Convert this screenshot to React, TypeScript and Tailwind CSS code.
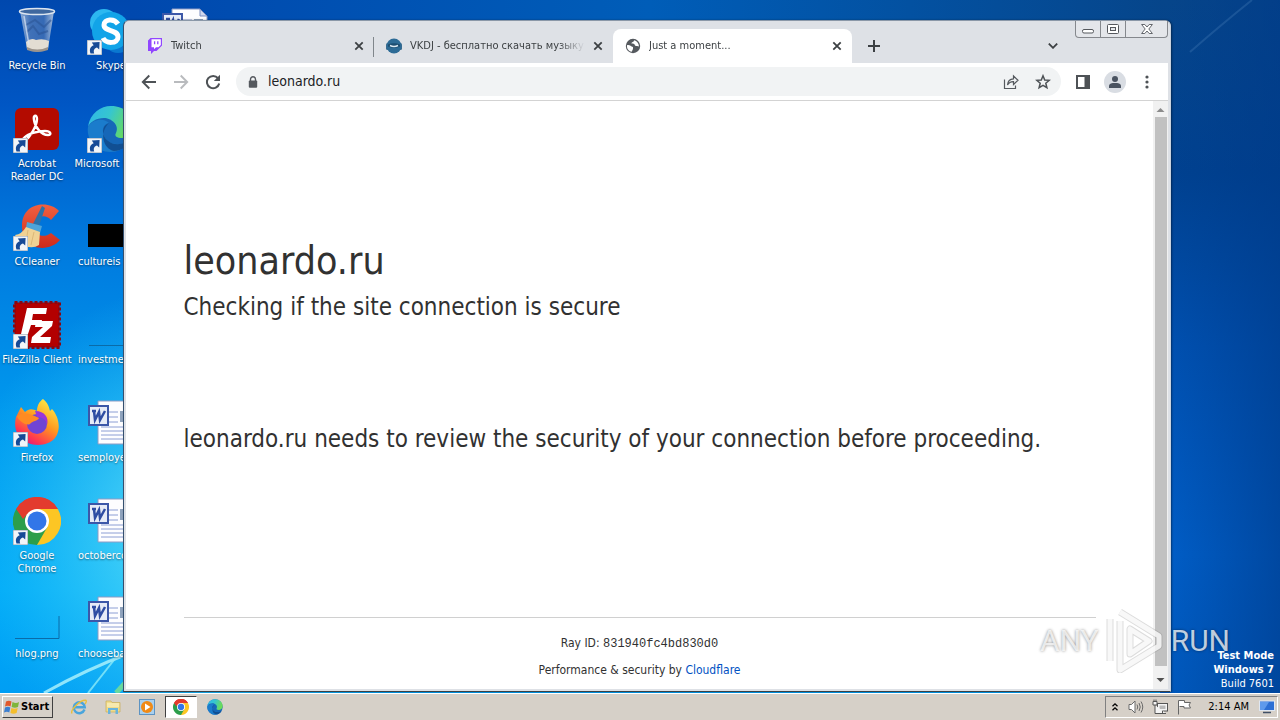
import { type ReactNode } from "react";

function ShortcutArrow() {
  return (
    <svg viewBox="0 0 15 15" className="absolute bottom-0 left-0 size-[15px]">
      <rect width="15" height="15" fill="#f2f5f9" stroke="#8d9aaa" strokeWidth="1" />
      <path d="M3.500 13.500C2 9.400 3.500 6.300 6.700 5.300L4.800 2.600 12.600 2 12.200 9.600 10 7.500C7.600 8.300 6 10 7.200 13.500Z" fill="#174a96" />
    </svg>
  );
}

function RecycleIcon() {
  return (
    <svg viewBox="0 0 48 48" className="size-12">
      <defs>
        <linearGradient id="bin" x1="0" x2="1">
          <stop offset="0" stopColor="#a9bfdc" />
          <stop offset=".3" stopColor="#4c78b8" />
          <stop offset=".7" stopColor="#3f6fb5" />
          <stop offset="1" stopColor="#c4d2e4" />
        </linearGradient>
      </defs>
      <path d="M7 4 41 4 35 42Q24 47 14 42Z" fill="url(#bin)" opacity=".85" />
      <path d="M13 35Q18 30 23 33 30 31 36 34L35 42Q24 47 14 42Z" fill="#e3ddd3" />
      <path d="M13 18 22 13 31 20 38 13M14 25 20 19 26 27 35 24" fill="none" stroke="#2c5596" strokeWidth="2" opacity=".6" />
      <path d="M14 40Q24 45 35 40V43Q24 47 14 43Z" fill="#9b938b" />
      <ellipse cx="24" cy="4.500" rx="17.500" ry="3" fill="#3f689f" stroke="#dce5ef" strokeWidth="1.500" />
      <path d="M11 9 16 38" stroke="#dbe7f6" strokeWidth="1.500" opacity=".7" />
    </svg>
  );
}

function SkypeIcon() {
  return (
    <svg viewBox="0 0 48 48" className="size-12">
      <circle cx="17" cy="16" r="14" fill="#2cb8f0" />
      <circle cx="31" cy="32" r="14" fill="#0a78d0" />
      <circle cx="24" cy="24" r="19" fill="#12a4e8" />
      <path d="M31 17C27 11 17 12 17 18 17 25 31 22 31 30 31 37 19 37 16 31" fill="none" stroke="#fff" strokeWidth="5" />
    </svg>
  );
}

function AcrobatIcon() {
  return (
    <svg viewBox="0 0 48 48" className="size-12">
      <rect x="2" y="3" width="44" height="42" rx="6" fill="#b30b00" />
      <path
        d="M12 36C17 32 24 21 24 14 24 9 20 10 21 15 22 22 28 30 35 30 39 30 38 26 32 26 24 26 15 29 12 32 9 34 9 38 12 36Z"
        fill="none"
        stroke="#fff"
        strokeWidth="2.400"
      />
    </svg>
  );
}

function EdgeIcon({ id, className }: { id: string; className: string }) {
  return (
    <svg viewBox="0 0 48 48" className={className}>
      <defs>
        <linearGradient id={id} x1="0" y1="0" x2="1" y2=".3">
          <stop offset="0" stopColor="#2eb5ea" />
          <stop offset=".5" stopColor="#36c6cf" />
          <stop offset="1" stopColor="#6bdc57" />
        </linearGradient>
      </defs>
      <circle cx="24" cy="24" r="23" fill="#1667b8" />
      <path d="M1 22C3 8 14 1 24 1 38 1 47 11 47 21 47 29 41 33 35 33 30 33 27 31 29 28 33 20 24 13 17 13 9 13 3 17 1 22Z" fill={`url(#${id})`} />
      <path d="M1 22C6 13 18 13 22 18 15 19 14 28 19 34 25 41 35 40 43 36 38 44 30 47 23 47 10 47-1 35 1 22Z" fill="#1b7ccc" />
      <path d="M22 18C14 21 15 31 20 35 26 41 36 40 44 35 40 42 34 46 27 46 16 44 12 27 22 18Z" fill="#114f93" />
    </svg>
  );
}

function CCleanerIcon() {
  return (
    <svg viewBox="0 0 48 48" className="size-12">
      <defs>
        <linearGradient id="cc" x1="0" y1="0" x2="0" y2="1">
          <stop offset="0" stopColor="#f0603f" />
          <stop offset="1" stopColor="#cf2a1c" />
        </linearGradient>
      </defs>
      <path d="M46 8C36-3 9-1 9 23 9 48 36 50 47 37L38 30C30 36 22 32 22 23 22 13 32 10 38 17Z" fill="url(#cc)" />
      <path d="M29 3 32 5 26 23 20 21Z" fill="#2b72a8" />
      <path d="M14 19 29 23 27 30 13 25Z" fill="#4da4d9" />
      <path d="M13 24 27 29 26 42Q20 46 12 43 7 40 2 32 9 31 13 24Z" fill="#f0d294" />
      <path d="M15 27 13 39M21 29 18 42" stroke="#dcb877" />
    </svg>
  );
}

function FileZillaIcon() {
  return (
    <svg viewBox="0 0 48 48" className="size-12">
      <rect x="1.500" y="1.500" width="45" height="45" fill="#b30000" stroke="#8a0610" strokeWidth="3" strokeDasharray="3 2" />
      <path d="M14 7H34L33 13H20L19 19H29L28 24H18L15 33H8Z" fill="#fff" />
      <path d="M23 20H40L39 25 27 36H38L37 42H18L19 36 30 26H22Z" fill="#fff" />
    </svg>
  );
}

function FirefoxIcon() {
  return (
    <svg viewBox="0 0 48 48" className="size-12">
      <defs>
        <linearGradient id="fox" x1=".8" y1="0" x2=".2" y2="1">
          <stop offset="0" stopColor="#fff04a" />
          <stop offset=".45" stopColor="#ff9a1e" />
          <stop offset=".8" stopColor="#ff3750" />
          <stop offset="1" stopColor="#d5138c" />
        </linearGradient>
      </defs>
      <path d="M30 0C35 4 36 8 37 12L39 10C50 22 49 46 25 46 9 46-1 34 3 18L8 8 12 13C16 9 20 10 24 12 24 6 27 2 30 0Z" fill="url(#fox)" />
      <circle cx="24" cy="25" r="10" fill="#7044d4" />
      <path d="M22 12C32 12 36 19 34 26 33 20 29 18 24 18Z" fill="#9a35d8" />
      <path d="M4 17C10 12 18 15 26 19 25 22 19 22 17 25 14 27 6 23 4 17Z" fill="#ff8b22" />
    </svg>
  );
}

function ChromeIcon({ className }: { className: string }) {
  return (
    <svg viewBox="0 0 48 48" className={className}>
      <path d="M24 24 3.200 12A24 24 0 0 1 44.800 12Z" fill="#e33b2e" />
      <path d="M24 24 44.800 12A24 24 0 0 1 24 48Z" fill="#fcc624" />
      <path d="M24 24 24 48A24 24 0 0 1 3.200 12Z" fill="#2c9e4b" />
      <path d="M24 12H44.800L34.400 30Z" fill="#fcc624" />
      <path d="M34.400 30 24 48 13.600 30Z" fill="#2c9e4b" />
      <path d="M3.200 12 13.600 30 24 12Z" fill="#2c9e4b" />
      <path d="M3.200 12A24 24 0 0 1 44.800 12H24L13.600 18 10 22Z" fill="#e33b2e" />
      <circle cx="24" cy="24" r="12" fill="#fff" />
      <circle cx="24" cy="24" r="9.500" fill="#3276e8" />
    </svg>
  );
}

function WordIcon() {
  return (
    <svg viewBox="0 0 48 48" className="size-12">
      <path d="M11 2H39L46 9V45H11Z" fill="#fdfdff" stroke="#8d9bc4" />
      <path d="M39 2V9H46Z" fill="#cfd8ee" stroke="#7d8fc0" />
      <path d="M22 13H31M22 18H31M22 23H31M14 28H42M14 32H42M14 36H42M14 40H42" stroke="#8c9ed4" />
      <rect x="33" y="12" width="9" height="11" fill="#8fa3bd" />
      <rect x="2" y="7" width="19" height="19" fill="#e6ebf7" stroke="#3c57a8" strokeWidth="2" />
      <path d="M5 12H9M7 12 8 21 12 13 13 21 18 12" fill="none" stroke="#2f4da3" strokeWidth="2.500" />
    </svg>
  );
}

type DesktopItem = { label: string; icon: ReactNode; shortcut?: boolean; start?: boolean };

const desktopColumns: DesktopItem[][] = [
  [
    { label: "Recycle Bin", icon: <RecycleIcon /> },
    { label: "Acrobat Reader DC", icon: <AcrobatIcon />, shortcut: true },
    { label: "CCleaner", icon: <CCleanerIcon />, shortcut: true },
    { label: "FileZilla Client", icon: <FileZillaIcon />, shortcut: true },
    { label: "Firefox", icon: <FirefoxIcon />, shortcut: true },
    { label: "Google Chrome", icon: <ChromeIcon className="size-12" />, shortcut: true },
    {
      label: "hlog.png",
      icon: (
        <svg viewBox="0 0 48 48" className="size-12">
          <path d="M46 21V43.500H2" fill="none" stroke="#0a6ba8" />
        </svg>
      ),
    },
  ],
  [
    { label: "Skype", icon: <SkypeIcon />, shortcut: true },
    { label: "Microsoft Edge", icon: <EdgeIcon id="edge-desktop" className="size-12" />, shortcut: true },
    {
      label: "cultureis",
      icon: (
        <svg viewBox="0 0 48 48" className="size-12">
          <rect x="1" y="21" width="47" height="23" />
        </svg>
      ),
      start: true,
    },
    {
      label: "investmen",
      icon: (
        <svg viewBox="0 0 48 48" className="size-12">
          <path d="M2 44.500H48" stroke="#0a6ba8" />
        </svg>
      ),
      start: true,
    },
    { label: "semploye", icon: <WordIcon />, start: true },
    { label: "octoberco", icon: <WordIcon />, start: true },
    { label: "chooseba", icon: <WordIcon />, start: true },
  ],
  [{ label: "", icon: <WordIcon /> }],
];

function Wallpaper() {
  return (
    <svg viewBox="0 0 1280 693" preserveAspectRatio="none" className="absolute inset-0 size-full">
      <defs>
        <linearGradient id="sky" x1="0" y1="0" x2="0" y2="1">
          <stop offset="0" stopColor="#0048ae" />
          <stop offset=".15" stopColor="#0056c4" />
          <stop offset=".35" stopColor="#0079de" />
          <stop offset=".6" stopColor="#0099ee" />
          <stop offset=".85" stopColor="#00aaf8" />
          <stop offset="1" stopColor="#009ef4" />
        </linearGradient>
        <radialGradient id="glow" gradientUnits="userSpaceOnUse" cx="210" cy="530" r="250">
          <stop offset="0" stopColor="#7ff0f8" stopOpacity=".9" />
          <stop offset="1" stopColor="#30d0f8" stopOpacity="0" />
        </radialGradient>
        <linearGradient id="east" x1="0" y1="0" x2="0" y2="1">
          <stop offset="0" stopColor="#06458a" />
          <stop offset=".25" stopColor="#004190" />
          <stop offset=".5" stopColor="#0050b0" />
          <stop offset=".8" stopColor="#005dc6" />
          <stop offset="1" stopColor="#0058bc" />
        </linearGradient>
        <linearGradient id="shade">
          <stop offset="0" stopColor="#003a88" stopOpacity="0" />
          <stop offset="1" stopColor="#003a88" stopOpacity=".6" />
        </linearGradient>
        <linearGradient id="top">
          <stop offset="0" stopColor="#0048ae" />
          <stop offset=".5" stopColor="#005db8" />
          <stop offset="1" stopColor="#06458a" />
        </linearGradient>
      </defs>
      <rect width="1280" height="693" fill="url(#sky)" />
      <rect width="500" height="693" fill="url(#glow)" />
      <rect x="130" width="1040" height="30" fill="url(#top)" />
      <rect x="1160" width="120" height="693" fill="url(#east)" />
      <rect x="1170" width="110" height="693" fill="url(#shade)" />
      <path d="M1190 52Q1222 24 1252 0" fill="none" stroke="#3c74b0" strokeWidth="2" opacity=".4" />
      <path d="M44 693Q85 670 130 653" fill="none" stroke="#a8f0fb" strokeWidth="3" opacity=".85" />
      <path d="M88 693 114 660" stroke="#8cebf8" strokeWidth="2" opacity=".8" />
      <path d="M116 693 128 680" stroke="#67d8a0" strokeWidth="5" />
    </svg>
  );
}

function TwitchIcon() {
  return (
    <svg viewBox="0 0 16 16" className="size-4 shrink-0">
      <path d="M3.500 0 1 2.500V13H4V16L7 13H9.500L15 7.500V0Z" fill="#9146ff" />
      <path d="M4.500 1.200H13.800V7L11.500 9.300H9L7 11.300V9.300H4.500Z" fill="#fff" />
      <path d="M7.600 3.300V6.300M10.800 3.300V6.300" stroke="#9146ff" strokeWidth="1.300" />
    </svg>
  );
}

function VkdjIcon() {
  return (
    <svg viewBox="0 0 16 16" className="size-4 shrink-0">
      <rect x="0" y="5" width="3" height="7" rx="1.500" fill="#3f6d8f" />
      <rect x="13" y="5" width="3" height="7" rx="1.500" fill="#3f6d8f" />
      <circle cx="8" cy="8" r="7.500" fill="#2d6b96" />
      <path d="M2 6.500Q8 4 14 6.500V8.500Q8 11 2 8.500Z" fill="#1c4d70" />
      <path d="M4 7.500Q8 9.500 12 7.500" fill="none" stroke="#dceaf3" strokeWidth="1.400" />
    </svg>
  );
}

function GlobeIcon() {
  return (
    <svg viewBox="0 0 16 16" className="size-4 shrink-0">
      <circle cx="8" cy="8" r="7.200" fill="#55595e" />
      <path d="M2 7.200C5 6.500 5.500 8.500 8 9V11L6.700 13.800C3.500 13.200 1.600 10.500 2 7.200ZM9 2.200C9 4.500 6.500 3.500 6.500 5.600 8 6 9.500 5.500 10 7.500 11 8.500 13 8 14 8.500 13.800 5 12 3 9 2.200Z" fill="#fff" />
    </svg>
  );
}

function CloseIcon() {
  return (
    <svg viewBox="0 0 10 10" className="size-[10px]">
      <path d="M1.300 1.300 8.700 8.700M8.700 1.300 1.300 8.700" stroke="#3c4043" strokeWidth="1.800" />
    </svg>
  );
}

const tabs = [
  { title: "Twitch", icon: <TwitchIcon />, active: false, separator: true },
  { title: "VKDJ - бесплатно скачать музыку", icon: <VkdjIcon />, active: false, separator: false },
  { title: "Just a moment...", icon: <GlobeIcon />, active: true, separator: false },
];

function TabStrip() {
  return (
    <div className="flex items-end pt-2 pl-[9px]">
      {tabs.map((tab) => (
        <div
          key={tab.title}
          className={`relative flex h-[34px] w-[239px] min-w-0 items-center gap-2 pr-[10px] pl-3 ${
            tab.active ? "rounded-t-lg bg-white" : ""
          }`}
        >
          {tab.icon}
          <span className="min-w-0 flex-1 overflow-hidden text-[11px] whitespace-nowrap text-[#3c4043] [mask-image:linear-gradient(to_right,#000_85%,transparent)]">
            {tab.title}
          </span>
          <button type="button" aria-label={`Close ${tab.title}`} className="shrink-0">
            <CloseIcon />
          </button>
          {tab.separator && <span className="absolute top-2 right-0 h-5 w-px bg-[#80868b]" />}
        </div>
      ))}
      <button type="button" aria-label="New tab" className="flex h-[34px] w-11 items-center justify-center">
        <svg viewBox="0 0 12 12" className="size-3">
          <path d="M6 0V12M0 6H12" stroke="#3c4043" strokeWidth="2" />
        </svg>
      </button>
      <button type="button" aria-label="Search tabs" className="mr-[101px] ml-auto flex h-[34px] w-7 items-center justify-center">
        <svg viewBox="0 0 10 6" className="h-[6px] w-[10px]">
          <path d="M.8.6 5 4.800 9.200.6" fill="none" stroke="#3c4043" strokeWidth="1.800" />
        </svg>
      </button>
    </div>
  );
}

function WindowButtons() {
  return (
    <div className="absolute top-0 right-[2px] flex h-[17px] divide-x divide-[#85888d] rounded-b-[4px] border border-t-0 border-[#85888d] bg-[#e4e6ea]">
      <button type="button" aria-label="Minimize" className="flex w-[25px] items-center justify-center">
        <svg viewBox="0 0 12 10" className="h-[10px] w-3">
          <rect x=".5" y="5.500" width="11" height="3.500" rx="1.500" fill="#fff" stroke="#55585d" />
        </svg>
      </button>
      <button type="button" aria-label="Maximize" className="flex w-[25px] items-center justify-center">
        <svg viewBox="0 0 12 10" className="h-[10px] w-3">
          <rect x=".5" y=".5" width="11" height="9" rx="1" fill="#fff" stroke="#55585d" />
          <rect x="3.500" y="3.500" width="5" height="3" fill="#e4e6ea" stroke="#55585d" />
        </svg>
      </button>
      <button type="button" aria-label="Close" className="flex w-[41px] items-center justify-center">
        <svg viewBox="0 0 12 10" className="h-[10px] w-3">
          <path d="M.6.5H3.800L6 3 8.200.5H11.400L7.800 5 11.400 9.500H8.200L6 7 3.800 9.500H.6L4.200 5Z" fill="#fff" stroke="#55585d" strokeWidth=".9" />
        </svg>
      </button>
    </div>
  );
}

function ToolButton({ label, children }: { label: string; children: ReactNode }) {
  return (
    <button type="button" aria-label={label} className="flex size-7 shrink-0 items-center justify-center">
      {children}
    </button>
  );
}

function Toolbar() {
  return (
    <div className="flex h-[38px] items-center gap-1 border-b border-[#d3d3d3] bg-white pr-[7px] pl-[9px]">
      <ToolButton label="Back">
        <svg viewBox="0 0 16 16" className="size-4" fill="none" stroke="#4e5256" strokeWidth="1.900">
          <path d="M15 8H2M8.300 1.500 1.800 8 8.300 14.500" />
        </svg>
      </ToolButton>
      <ToolButton label="Forward">
        <svg viewBox="0 0 16 16" className="size-4" fill="none" stroke="#b9bbbe" strokeWidth="1.900">
          <path d="M1 8H14M7.700 1.500 14.200 8 7.700 14.500" />
        </svg>
      </ToolButton>
      <ToolButton label="Reload">
        <svg viewBox="0 0 16 16" className="size-4">
          <path d="M13 4.200A6.200 6.200 0 1 0 14.200 9.500" fill="none" stroke="#4e5256" strokeWidth="2" />
          <path d="M15 .8V7H8.800Z" fill="#4e5256" />
        </svg>
      </ToolButton>
      <div className="ml-[5px] flex h-[29px] min-w-0 flex-1 items-center gap-1 rounded-full bg-[#f1f3f4] pr-1 pl-3">
        <svg viewBox="0 0 10 12" className="h-3 w-[10px] shrink-0">
          <path d="M2.500 5V3.300A2.500 2.500 0 0 1 7.500 3.300V5" fill="none" stroke="#55595e" strokeWidth="1.400" />
          <rect x=".8" y="4.500" width="8.400" height="7.300" rx="1" fill="#55595e" />
        </svg>
        <input
          type="text"
          aria-label="Address"
          defaultValue="leonardo.ru"
          className="ml-[6px] h-5 min-w-0 flex-1 bg-transparent text-[14px] text-[#202124] outline-none"
        />
        <ToolButton label="Share">
          <svg viewBox="0 0 16 16" className="size-4" fill="none" stroke="#55595e" strokeWidth="1.200">
            <path d="M1.500 5.500V14.500H12.500V11.500M4.500 11C4.800 7 7 5 10.500 4.800V2L15 6.300 10.500 10.500V7.700C7.800 7.600 6 8.500 4.500 11Z" />
          </svg>
        </ToolButton>
        <ToolButton label="Bookmark">
          <svg viewBox="0 0 16 16" className="size-4" fill="none" stroke="#4e5256" strokeWidth="1.500">
            <path d="M8 1.800 9.700 6 14.300 6.300 10.800 9.200 11.900 13.700 8 11.300 4.100 13.700 5.200 9.200 1.700 6.300 6.300 6Z" />
          </svg>
        </ToolButton>
      </div>
      <div className="ml-1 flex gap-1">
        <ToolButton label="Side panel">
          <svg viewBox="0 0 14 14" className="size-[14px]">
            <rect x="1" y="1" width="12" height="12" fill="#fff" stroke="#4e5256" strokeWidth="2" />
            <rect x="8.500" y="1" width="5" height="12" fill="#4e5256" />
          </svg>
        </ToolButton>
        <ToolButton label="Profile">
          <svg viewBox="0 0 22 22" className="size-[22px]">
            <circle cx="11" cy="11" r="11" fill="#d9dde3" />
            <circle cx="11" cy="8" r="3" fill="#4a5360" />
            <path d="M5 17V15C5 12.500 8 12 11 12S17 12.500 17 15V17Z" fill="#4a5360" />
          </svg>
        </ToolButton>
        <ToolButton label="Menu">
          <svg viewBox="0 0 4 14" className="h-[14px] w-1" fill="#4e5256">
            <circle cx="2" cy="2" r="1.600" />
            <circle cx="2" cy="7" r="1.600" />
            <circle cx="2" cy="12" r="1.600" />
          </svg>
        </ToolButton>
      </div>
    </div>
  );
}

function Page() {
  return (
    <div className="flex min-w-0 flex-1 flex-col bg-white text-[#313131]">
      <main className="mx-auto w-full max-w-[960px] flex-1 px-6 pt-[136px]">
        <h1 className="text-[39px] leading-[48px]">leonardo.ru</h1>
        <h2 className="text-[24px] leading-[44px]">Checking if the site connection is secure</h2>
        <p className="mt-[88px] text-[24px] leading-[44px]">
          leonardo.ru needs to review the security of your connection before proceeding.
        </p>
      </main>
      <footer className="mx-auto w-full max-w-[960px] px-6">
        <div className="border-t border-[#d0d0d0] pt-4 pb-[10px] text-center text-[12px] leading-[18px]">
          <p className="mb-2">
            Ray ID: <code className="font-['Liberation_Mono',monospace] text-[12px]">831940fc4bd830d0</code>
          </p>
          <p>
            Performance &amp; security by{" "}
            <a href="#cloudflare" className="text-[#0051c3]">
              Cloudflare
            </a>
          </p>
        </div>
      </footer>
    </div>
  );
}

function Scrollbar() {
  return (
    <div className="flex w-[15px] shrink-0 flex-col items-center bg-[#f1f1f1]">
      <svg viewBox="0 0 15 16" className="h-4 w-[15px]">
        <path d="M3.500 11 7.500 7 11.500 11Z" fill="#8b8b8b" />
      </svg>
      <div className="w-3 flex-1 bg-[#c1c1c1]" />
      <svg viewBox="0 0 15 23" className="h-[23px] w-[15px]">
        <path d="M3.500 12 7.500 16 11.500 12Z" fill="#505050" />
      </svg>
    </div>
  );
}

function BrowserWindow() {
  return (
    <section className="absolute top-[20px] right-[109px] bottom-[1px] left-[123px] flex flex-col rounded-t-md border border-t-[#8b98a8] border-r-[#c9d2de] border-b-[#3c4043] border-l-[#35506f] bg-[#dee1e6] shadow-[1px_0_2px_#00000066]">
      <WindowButtons />
      <div className="mr-[2px] mb-[2px] ml-[2px] flex min-h-0 flex-1 flex-col">
        <TabStrip />
        <Toolbar />
        <div className="flex min-h-0 flex-1">
          <Page />
          <Scrollbar />
        </div>
      </div>
    </section>
  );
}

function Watermark() {
  return (
    <div className="pointer-events-none absolute right-[50px] bottom-[20px] flex items-center gap-[6px] font-[Roboto,sans-serif] text-[30px] leading-[62px] text-white/75 [text-shadow:0_0_3px_#00000077]">
      <span>ANY</span>
      <svg viewBox="0 0 60 64" className="h-16 w-[60px]" fill="none" stroke="#fff" strokeLinejoin="round">
        <g stroke="#777" strokeWidth="7" opacity=".25">
          <path d="M15 3 54 27V37L15 61V12" />
          <path d="M5 10V52M25 20V45L44 32Z" />
        </g>
        <g strokeWidth="5" opacity=".8">
          <path d="M15 3 54 27V37L15 61V12" />
          <path d="M5 10V52M25 20V45L44 32Z" />
        </g>
      </svg>
      <span>RUN</span>
    </div>
  );
}

const quickLaunch = [
  {
    label: "Internet Explorer",
    icon: (
      <svg viewBox="0 0 16 16" className="size-4">
        <path d="M13.500 10.500A5.500 5.500 0 1 1 13.800 8.300H4" fill="none" stroke="#4aa5dc" strokeWidth="2.400" />
        <path d="M1 14.500C-1 11 9 1 14.500 1.200 16 1.500 15 4 14 5" fill="none" stroke="#e8bf3c" strokeWidth="1.400" />
      </svg>
    ),
  },
  {
    label: "Explorer",
    icon: (
      <svg viewBox="0 0 16 16" className="size-4">
        <path d="M1 2H6L7 3.500H15V13H1Z" fill="#f0dc8c" stroke="#c9ae58" strokeWidth=".7" />
        <path d="M2 5H14M2 7H14" stroke="#fff7cf" />
        <path d="M3 15V9H13V15H10.500V11H5.500V15Z" fill="#6ab4dc" />
      </svg>
    ),
  },
  {
    label: "Media Player",
    icon: (
      <svg viewBox="0 0 16 16" className="size-4">
        <rect x=".5" y=".5" width="15" height="15" fill="#a9d0ee" stroke="#5d93c2" />
        <circle cx="8" cy="8" r="6" fill="#f08a16" />
        <path d="M6 4.500 11.500 8 6 11.500Z" fill="#fff" />
      </svg>
    ),
  },
  { label: "Chrome", icon: <ChromeIcon className="size-4" />, active: true },
  { label: "Edge", icon: <EdgeIcon id="edge-taskbar" className="size-4" /> },
];

function Taskbar() {
  return (
    <footer className="flex h-[27px] shrink-0 items-center border-t border-white bg-[#d6d0c8] px-[2px] text-[11px] text-black">
      <button
        type="button"
        className="flex h-[22px] items-center gap-px border border-t-white border-r-[#404040] border-b-[#404040] border-l-white pr-[3px] pl-px font-bold"
      >
        <svg viewBox="0 0 16 16" className="size-4">
          <path d="M2 2.500Q5 .8 7.500 2.500L6.500 7.500Q4 6 1 7.500Z" fill="#e2592b" />
          <path d="M8.500 3Q12 4.800 15 3L14 8Q11 9.500 7.600 8Z" fill="#7fb539" />
          <path d="M1 8.500Q4 7 6.300 8.500L5.300 13.500Q3 12 0 13.500Z" fill="#3c7fd0" />
          <path d="M7.400 9Q10.500 10.500 13.700 9L12.600 14Q9.500 15.500 6.400 14Z" fill="#f4be2c" />
        </svg>
        Start
      </button>
      <nav className="ml-[10px] flex gap-[2px]">
        {quickLaunch.map((item) => (
          <button
            key={item.label}
            type="button"
            aria-label={item.label}
            className={`flex h-[22px] w-8 items-center justify-center ${
              item.active ? "border border-t-[#404040] border-r-white border-b-white border-l-[#404040] bg-white" : ""
            }`}
          >
            {item.icon}
          </button>
        ))}
      </nav>
      <div className="ml-auto flex h-[22px] items-center border border-t-[#808080] border-r-white border-b-white border-l-[#808080] pr-[2px] pl-[5px]">
        <svg viewBox="0 0 8 10" className="h-[10px] w-2" fill="none" stroke="#000" strokeWidth="1.300">
          <path d="M1.500 4.200 4 1.800 6.500 4.200M1.500 8.200 4 5.800 6.500 8.200" />
        </svg>
        <svg viewBox="0 0 16 16" className="ml-[9px] size-4" fill="#fff" stroke="#6a6a6a">
          <path d="M1 5.500H3.500L7 2V14L3.500 10.500H1Z" />
          <path d="M9 5.500Q10.500 8 9 10.500M11 4Q13.500 8 11 12M13 2.500Q16.500 8 13 13.500" fill="none" />
        </svg>
        <svg viewBox="0 0 16 16" className="ml-2 size-4" fill="#f4f4f4" stroke="#555">
          <rect x="5.500" y="4.500" width="10" height="7.500" />
          <rect x="7.500" y="6.500" width="6" height="3.500" fill="#b9b9b9" stroke="none" />
          <path d="M1 2.500H5V6H1ZM2 2.500V.5M4 2.500V.5M3 6V14.500H14M10.500 12V14" />
        </svg>
        <svg viewBox="0 0 16 16" className="ml-2 size-4" fill="#fff" stroke="#666">
          <path d="M2.500 15.500V1.500H8.500V3.500H14.500L13 6 14.500 9H8V7.500H3.500" />
        </svg>
        <time className="ml-4 text-[11px]">2:14 AM</time>
        <svg viewBox="0 0 16 14" className="ml-[10px] h-[14px] w-4">
          <rect x=".5" y="1" width="15" height="9.500" fill="#2c6fd4" stroke="#dfe7f2" />
          <path d="M1 2H10L5 10H1Z" fill="#5e9aec" />
          <path d="M4 12.500H12" stroke="#3f4f66" strokeWidth="1.500" />
        </svg>
      </div>
    </footer>
  );
}

export default function App() {
  return (
    <div className="flex h-screen flex-col overflow-hidden font-['DejaVu_Sans_Condensed','DejaVu_Sans','Noto_Sans',sans-serif]">
      <div className="relative min-h-0 flex-1 overflow-hidden bg-[#0060c8]">
        <Wallpaper />
        <div className="relative flex pt-[7px]">
          {desktopColumns.map((column, i) => (
            <ul key={i} className="w-[74px] shrink-0">
              {column.map((item, j) => (
                <li key={j} className="flex h-[98px] flex-col items-center">
                  <div className="relative size-12">
                    {item.icon}
                    {item.shortcut && <ShortcutArrow />}
                  </div>
                  <span
                    className={`mt-1 text-[11px] leading-[13px] text-white [text-shadow:0_1px_2px_#00000080] ${
                      item.start ? "w-full pl-1 text-left" : "text-center"
                    } ${i === 1 ? "whitespace-nowrap" : ""}`}
                  >
                    {item.label}
                  </span>
                </li>
              ))}
            </ul>
          ))}
        </div>
        <BrowserWindow />
        <div className="absolute right-[6px] bottom-[2px] text-right text-[11px] leading-[14px] text-white">
          <p className="font-bold">Test Mode</p>
          <p className="font-bold">Windows 7</p>
          <p>Build 7601</p>
        </div>
        <Watermark />
      </div>
      <Taskbar />
    </div>
  );
}
